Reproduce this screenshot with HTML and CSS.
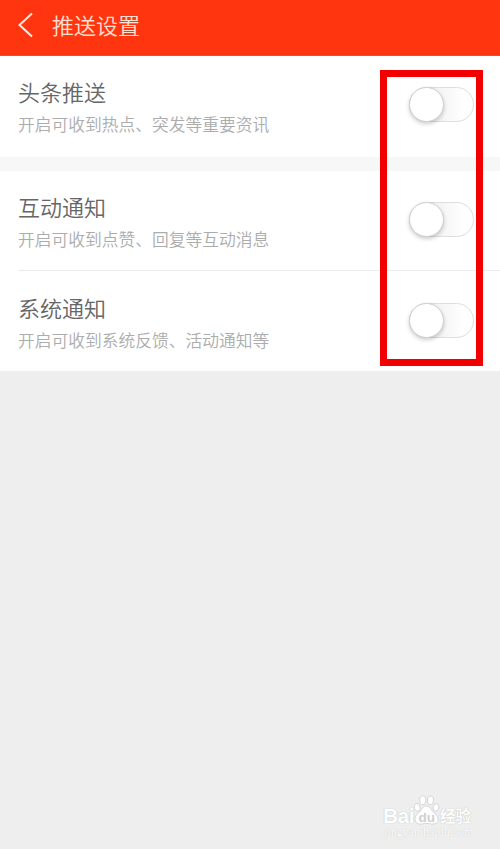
FILE: index.html
```html
<!DOCTYPE html>
<html lang="zh-CN">
<head>
    <meta charset="UTF-8">
    <meta name="viewport" content="width=device-width, initial-scale=1.0">
    <title>推送设置</title>
    <link rel="stylesheet" href="styles.css">
</head>
<body>
    <header class="header">
        <svg class="back" width="16" height="26" viewBox="0 0 16 26">
            <path d="M15 1.5L2.500 13L15 24.5" fill="none" stroke="#ffe9dc" stroke-width="2"/>
        </svg>
        <h1>推送设置</h1>
    </header>
    <main>
        <section class="group">
            <div class="item">
                <div class="text">
                    <h2>头条推送</h2>
                    <p>开启可收到热点、突发等重要资讯</p>
                </div>
                <div class="switch"></div>
            </div>
        </section>
        <section class="group">
            <div class="item">
                <div class="text">
                    <h2>互动通知</h2>
                    <p>开启可收到点赞、回复等互动消息</p>
                </div>
                <div class="switch"></div>
            </div>
            <div class="item">
                <div class="text">
                    <h2>系统通知</h2>
                    <p>开启可收到系统反馈、活动通知等</p>
                </div>
                <div class="switch"></div>
            </div>
        </section>
    </main>
    <div class="highlight"></div>
    <div class="watermark">
        <div class="logo">
            <span class="bai">Bai</span>
            <svg width="27" height="30" viewBox="0 0 26 30">
                <g fill="#fff" stroke="#cecece" stroke-width="0.8">
                    <ellipse cx="3.7" cy="12.5" rx="2.9" ry="4" transform="rotate(-15 3.7 12.5)"/>
                    <ellipse cx="9.3" cy="5.3" rx="3" ry="4.4"/>
                    <ellipse cx="17" cy="5.3" rx="3" ry="4.4" transform="rotate(8 17 5.3)"/>
                    <ellipse cx="22.5" cy="12.5" rx="2.9" ry="4" transform="rotate(15 22.5 12.5)"/>
                    <path d="M13 11C9.500 11 8.500 14.500 6 17C3 19.500 1 22 1.500 25C2 28 5 29.500 8 29C11 28.300 15 28.300 18 29C21.500 29.500 24.500 28 24.700 25C25 22 22.500 19.500 20 17C17.500 14.500 16.500 11 13 11Z"/>
                </g>
                <text x="13.200" y="26.500" text-anchor="middle" class="du">du</text>
            </svg>
            <span class="cn">经验</span>
        </div>
        <div class="url">jingyan.baidu.com</div>
    </div>
</body>
</html>
```
FILE: styles.css
```css
* {
    box-sizing: border-box;
}
body {
    margin: 0;
    position: relative;
    height: 849px;
    overflow: hidden;
    font-family: "Noto Sans CJK SC", sans-serif;
    font-weight: 350;
    background-color: #eeeeee;
}
h1, h2, p {
    margin: 0;
    font-weight: 350;
}
.header {
    display: flex;
    align-items: center;
    height: 56px;
    padding: 0 17px 5px;
    background-color: #ff3510;
    border-bottom: 1px solid #f04a2c;
}
.header h1 {
    margin: -2px 0 0 19px;
    font-size: 22px;
    line-height: 32px;
    color: #ffe0d0;
}
.group {
    background-color: #fff;
}
.group + .group {
    border-top: 14px solid #f7f7f7;
}
.item {
    display: flex;
    justify-content: space-between;
    height: 101px;
    margin-left: 18px;
    padding: 19px 26px 0 0;
}
.item + .item {
    margin-top: -2px;
    padding-top: 20px;
    border-top: 1px solid #ebebeb;
}
.item h2 {
    font-size: 22px;
    line-height: 32px;
    color: #666;
}
.item p {
    margin-top: 5px;
    font-size: 16.75px;
    line-height: 24px;
    color: #acacac;
}
.switch {
    width: 65px;
    height: 35px;
    margin-top: 12px;
    border: 1px solid #dedede;
    border-radius: 18px;
    background: linear-gradient(90deg, #f5f5f5 50%, #fff 85%);
}
.switch::before {
    content: "";
    display: block;
    box-sizing: border-box;
    width: 35px;
    height: 35px;
    margin: -1px;
    border: 1px solid #cfcfcf;
    border-radius: 50%;
    background-color: #fff;
    box-shadow: 0 2px 4px rgba(0,0,0,0.2);
}
.highlight {
    position: absolute;
    left: 380px;
    top: 70px;
    width: 103px;
    height: 296px;
    border: 7px solid #f20000;
}
.watermark {
    position: absolute;
    left: 383px;
    top: 794px;
    width: 92px;
    color: #fff;
}
.logo {
    display: flex;
    align-items: flex-end;
    height: 31px;
    font-family: "Liberation Sans", sans-serif;
    font-size: 21px;
    font-weight: bold;
    line-height: 19px;
    text-shadow: 0 0 1px #aaa;
}
.logo .bai {
    width: 30px;
    letter-spacing: -0.6px;
}
.logo svg {
    flex: none;
}
.logo .cn {
    font-family: "Noto Sans CJK SC", sans-serif;
    font-size: 15.5px;
}
.du {
    font-size: 13.5px;
    fill: #cfcfcf;
    text-shadow: none;
}
.url {
    padding-left: 1px;
    font-family: "Liberation Serif", serif;
    font-size: 12px;
    font-weight: 400;
    line-height: 14px;
    color: #fff;
    text-shadow: 0 0 1px #bbb;
}
```
